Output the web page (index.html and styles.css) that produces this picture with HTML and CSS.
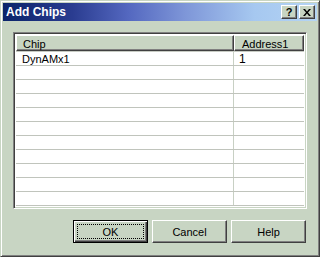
FILE: index.html
```html
<!DOCTYPE html>
<html lang="en">
<head>
  <meta charset="UTF-8" />
  <title>Add Chips</title>
  <link rel="stylesheet" href="styles.css">
</head>
<body>
  <div class="window">
    <div class="titlebar">
      <span class="title">Add Chips</span>
      <div class="caption-buttons">
        <button class="cap-btn">?</button>
        <button class="cap-btn cap-close">
          <svg width="8" height="7" viewBox="0 0 8 7"><path d="M0 0h2l2 2.5L6 0h2L5 3.5 8 7H6L4 4.5 2 7H0l3-3.5z" fill="#000"/></svg>
        </button>
      </div>
    </div>

    <div class="content">
      <div class="grid">
        <div class="grid-head">
          <div class="head-cell col-chip">Chip</div>
          <div class="head-cell col-addr">Address1</div>
        </div>
        <div class="grid-body">
          <div class="row"><div class="cell col-chip">DynAMx1</div><div class="cell col-addr">1</div></div>
          <div class="row"><div class="cell col-chip"></div><div class="cell col-addr"></div></div>
          <div class="row"><div class="cell col-chip"></div><div class="cell col-addr"></div></div>
          <div class="row"><div class="cell col-chip"></div><div class="cell col-addr"></div></div>
          <div class="row"><div class="cell col-chip"></div><div class="cell col-addr"></div></div>
          <div class="row"><div class="cell col-chip"></div><div class="cell col-addr"></div></div>
          <div class="row"><div class="cell col-chip"></div><div class="cell col-addr"></div></div>
          <div class="row"><div class="cell col-chip"></div><div class="cell col-addr"></div></div>
          <div class="row"><div class="cell col-chip"></div><div class="cell col-addr"></div></div>
          <div class="row"><div class="cell col-chip"></div><div class="cell col-addr"></div></div>
          <div class="row"><div class="cell col-chip"></div><div class="cell col-addr"></div></div>
        </div>
      </div>

      <div class="actions">
        <button class="btn btn-default"><span class="focus">OK</span></button>
        <button class="btn">Cancel</button>
        <button class="btn">Help</button>
      </div>
    </div>
  </div>
</body>
</html>
```

FILE: styles.css
```css
body {
  margin: 0;
  font-family: 'Liberation Sans', Arial, sans-serif;
  font-size: 11px;
  color: #000;
}

/* Dialog frame */
.window {
  width: 320px;
  height: 257px;
  box-sizing: border-box;
  background-color: #c8d5c3;
  border: 1px solid;
  border-color: #c8d5c3 #404040 #404040 #c8d5c3;
  box-shadow: inset 1px 1px 0 #fff, inset -1px -1px 0 #808080;
  padding: 2px;
  display: flex;
  flex-direction: column;
}

.titlebar {
  height: 18px;
  background: linear-gradient(to right, #0a246a 0%, #2a3c90 22%, #5468c0 40%, #7e96d8 58%, #a6c8f0 80%, #b4d4f4 100%);
  display: flex;
  align-items: center;
  justify-content: space-between;
  padding: 0 2px 0 3px;
}

.title {
  color: #fff;
  font-weight: bold;
  font-size: 12px;
}

.caption-buttons {
  display: flex;
  gap: 2px;
}

.cap-btn {
  width: 16px;
  height: 14px;
  padding: 0;
  margin: 0;
  background-color: #c8d5c3;
  border: 1px solid;
  border-color: #fff #404040 #404040 #fff;
  box-shadow: inset -1px -1px 0 #808080;
  font-family: 'Liberation Sans', Arial, sans-serif;
  font-weight: bold;
  font-size: 11px;
  line-height: 11px;
  display: flex;
  align-items: center;
  justify-content: center;
}

/* Content */
.content {
  flex: 1;
  padding: 11px 10px 0 10px;
  display: flex;
  flex-direction: column;
}

.grid {
  width: 294px;
  height: 177px;
  box-sizing: border-box;
  border: 1px solid;
  border-color: #808080 #fff #fff #808080;
  box-shadow: inset 1px 1px 0 #404040, inset -1px -1px 0 #c8d5c3;
  padding: 2px;
  background-color: #fff;
  display: flex;
  flex-direction: column;
}

.grid-head {
  display: flex;
  height: 18px;
  background-color: #c8d5c3;
}

.head-cell {
  box-sizing: border-box;
  border: 1px solid;
  border-color: #fff #404040 #404040 #fff;
  box-shadow: inset -1px -1px 0 #808080;
  padding: 2px 0 0 6px;
  line-height: 12px;
}

.col-chip {
  width: 218px;
}

.col-addr {
  width: 70px;
}

.head-cell.col-addr {
  padding-left: 7px;
}

.grid-body {
  flex: 1;
  border-top: 1px solid #c8ccc4;
}

.row {
  display: flex;
  height: 14px;
  box-sizing: border-box;
  border-bottom: 1px solid #c0c4bc;
}

.cell {
  box-sizing: border-box;
  padding: 1px 0 0 6px;
  line-height: 12px;
}

.cell.col-chip {
  border-right: 1px solid #c8d0c4;
}

.cell.col-addr {
  padding-left: 5px;
  font-size: 12px;
}

/* Buttons */
.actions {
  display: flex;
  justify-content: flex-end;
  gap: 4px;
  margin-top: 11px;
  padding-right: 1px;
}

.btn {
  width: 75px;
  height: 23px;
  margin: 0;
  padding: 0;
  box-sizing: border-box;
  background-color: #c8d5c3;
  border: 1px solid;
  border-color: #fff #404040 #404040 #fff;
  box-shadow: inset -1px -1px 0 #808080;
  font-family: 'Liberation Sans', Arial, sans-serif;
  font-size: 11px;
  color: #000;
}

.btn-default {
  border: 1px solid #000;
  box-shadow: inset 1px 1px 0 #fff, inset -1px -1px 0 #404040, inset -2px -2px 0 #808080;
  padding: 3px;
}

.focus {
  display: flex;
  align-items: center;
  justify-content: center;
  height: 100%;
  box-sizing: border-box;
  border: 1px dotted #000;
}
```
